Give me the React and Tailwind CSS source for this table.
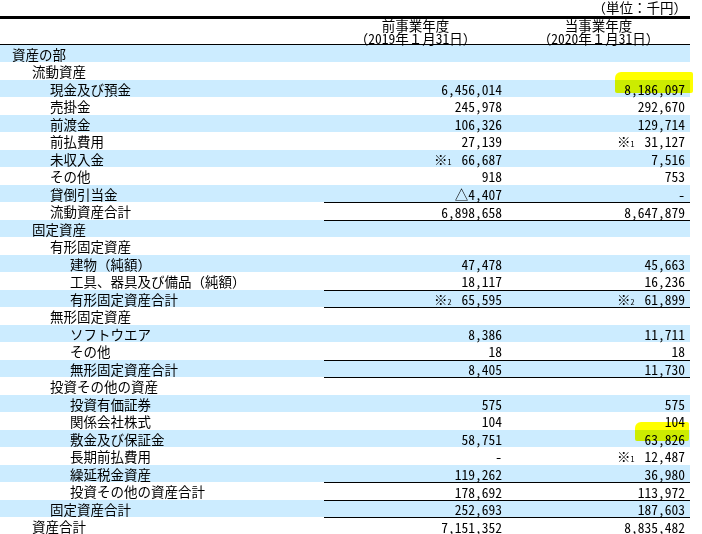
import React from 'react';

const rows = [
  { label: '資産の部', lv: 0 },
  { label: '流動資産', lv: 1 },
  { label: '現金及び預金', lv: 2, a: '6,456,014', b: '8,186,097', markB: 'right-[-3px] top-[-8px] h-[21px] w-[78px]' },
  { label: '売掛金', lv: 2, a: '245,978', b: '292,670' },
  { label: '前渡金', lv: 2, a: '106,326', b: '129,714' },
  { label: '前払費用', lv: 2, a: '27,139', b: '31,127', noteB: '1' },
  { label: '未収入金', lv: 2, a: '66,687', noteA: '1', b: '7,516' },
  { label: 'その他', lv: 2, a: '918', b: '753' },
  { label: '貸倒引当金', lv: 2, a: '△4,407', b: '-' },
  { label: '流動資産合計', lv: 2, a: '6,898,658', b: '8,647,879', line: true },
  { label: '固定資産', lv: 1, line: true },
  { label: '有形固定資産', lv: 2 },
  { label: '建物（純額）', lv: 3, a: '47,478', b: '45,663' },
  { label: '工具、器具及び備品（純額）', lv: 3, a: '18,117', b: '16,236' },
  { label: '有形固定資産合計', lv: 3, a: '65,595', noteA: '2', b: '61,899', noteB: '2', line: true },
  { label: '無形固定資産', lv: 2, line: true },
  { label: 'ソフトウエア', lv: 3, a: '8,386', b: '11,711' },
  { label: 'その他', lv: 3, a: '18', b: '18' },
  { label: '無形固定資産合計', lv: 3, a: '8,405', b: '11,730', line: true },
  { label: '投資その他の資産', lv: 2, line: true },
  { label: '投資有価証券', lv: 3, a: '575', b: '575' },
  { label: '関係会社株式', lv: 3, a: '104', b: '104' },
  { label: '敷金及び保証金', lv: 3, a: '58,751', b: '63,826', markB: 'right-[1px] top-[-8px] h-[19px] w-[54px]' },
  { label: '長期前払費用', lv: 3, a: '-', b: '12,487', noteB: '1' },
  { label: '繰延税金資産', lv: 3, a: '119,262', b: '36,980' },
  { label: '投資その他の資産合計', lv: 3, a: '178,692', b: '113,972', line: true },
  { label: '固定資産合計', lv: 2, a: '252,693', b: '187,603', line: true },
  { label: '資産合計', lv: 1, a: '7,151,352', b: '8,835,482', line: true },
];

const indent = ['pl-[12px]', 'pl-[32px]', 'pl-[50px]', 'pl-[70px]'];

// number cell, right aligned, with optional ※ note and marker highlight
const Num = ({ value, note, line, mark }) => (
  <div className={`relative flex items-center justify-end pr-[5px] ${line ? 'border-t border-black' : ''}`}>
    {mark && (
      <span className={`absolute rounded-tl-[6px] rounded-[2px] bg-[#ffff00] mix-blend-multiply ${mark}`} />
    )}
    {note && (
      <span className="mr-[10px] flex items-end">
        <span>※</span>
        <span className="text-[8px] leading-[8px] mb-[1px]">{note}</span>
      </span>
    )}
    <span className="relative">{value}</span>
  </div>
);

export default function App() {
  return (
    <div className="w-[702px] h-[534px] overflow-hidden bg-white text-black text-[13.5px] font-['Noto_Sans_Mono_CJK_JP','Noto_Sans_CJK_JP',monospace]">
      <div className="w-[690px]">
        <div className="h-[16px] text-right pr-[3px] leading-[14px]">（単位：千円）</div>
        <div className="grid grid-cols-[324px_183px_183px] h-[29px] border-t-[3px] border-b border-black leading-[12.5px]">
          <div />
          <div className="flex flex-col items-center">
            <span>前事業年度</span>
            <span>（2019年１月31日）</span>
          </div>
          <div className="flex flex-col items-center">
            <span>当事業年度</span>
            <span>（2020年１月31日）</span>
          </div>
        </div>
        {rows.map((r, i) => (
          <div
            key={i}
            className={`grid grid-cols-[324px_183px_183px] leading-[16px] ${i % 2 === 0 ? 'h-[17px] bg-[#ccecff]' : 'h-[18px] bg-white'}`}
          >
            <div className={`flex items-center whitespace-nowrap ${indent[r.lv]}`}>{r.label}</div>
            <Num value={r.a} note={r.noteA} line={r.line} />
            <Num value={r.b} note={r.noteB} line={r.line} mark={r.markB} />
          </div>
        ))}
      </div>
    </div>
  );
}
